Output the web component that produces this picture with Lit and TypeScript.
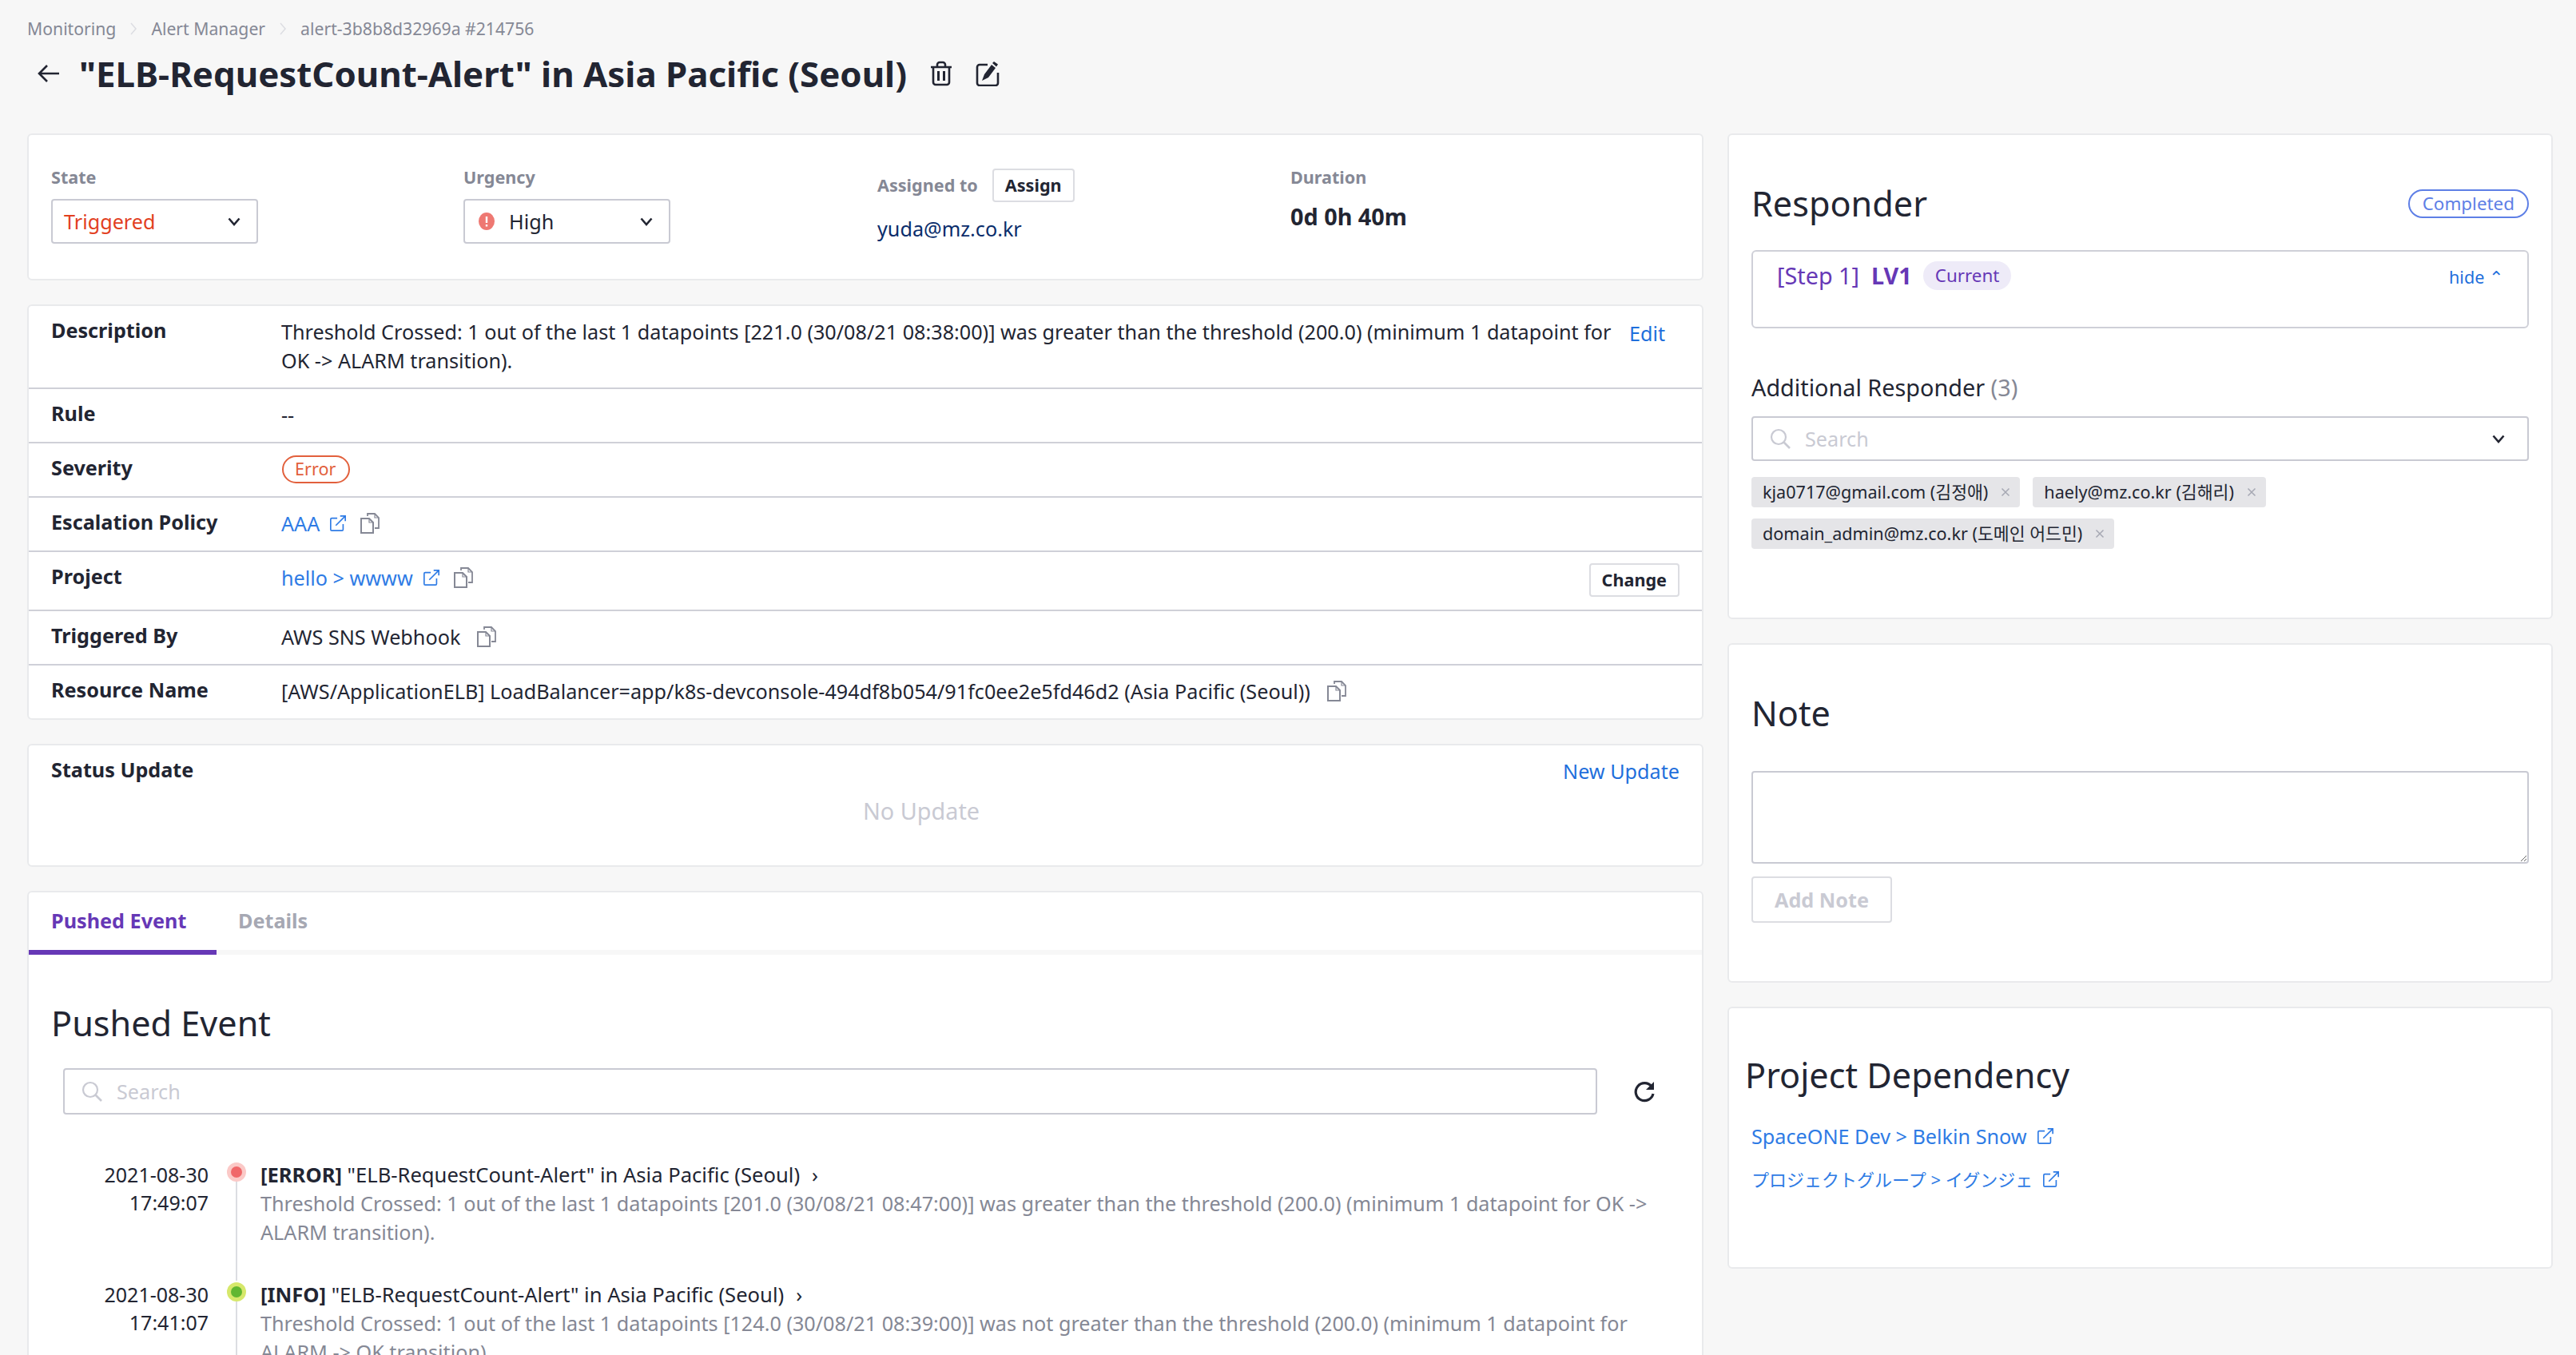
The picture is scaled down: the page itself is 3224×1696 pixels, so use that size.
import { LitElement, html, css } from "lit";
import { customElement } from "lit/decorators.js";

const chevron = html`<svg class="chev" viewBox="0 0 20 20"><path d="M3.500 6.500 10 14l6.500-7.500" fill="none" stroke="#222532" stroke-width="2.600"/></svg>`;
const searchIcon = html`<svg class="search-ico" viewBox="0 0 28 28"><circle cx="12" cy="12" r="9" fill="none" stroke="#c9cad3" stroke-width="2.200"/><path d="m18.500 18.500 7.500 7.500" stroke="#c9cad3" stroke-width="2.600"/></svg>`;
const extLink = html`<svg class="ico" viewBox="0 0 24 24"><path d="M11 5H3.500A1.500 1.500 0 0 0 2 6.500V20.500A1.500 1.500 0 0 0 3.500 22h14a1.500 1.500 0 0 0 1.500-1.500V13" fill="none" stroke="#2e7be5" stroke-width="1.800"/><path d="M9 15 22 2M15 2h7v7" fill="none" stroke="#2e7be5" stroke-width="1.800"/></svg>`;
const copyIcon = html`<svg class="copy" viewBox="0 0 26 28"><path d="M10 5V2h9l5 5v13h-5" fill="none" stroke="#858895" stroke-width="1.800"/><path d="M2 8h10l5 5v13H2z" fill="#fff" stroke="#858895" stroke-width="2"/><path d="M12 8v5h5M19 2v5h5" fill="none" stroke="#858895" stroke-width="1.200"/></svg>`;
const closeIcon = html`<svg class="x" viewBox="0 0 12 12"><path d="m1.500 1.500 9 9m0-9-9 9" stroke="#a6a8b3" stroke-width="1.500"/></svg>`;

const infoRows = [
  { label: "Rule", value: html`--` },
  { label: "Severity", value: html`<span class="sev">Error</span>` },
  { label: "Escalation Policy", value: html`<a class="link">AAA</a>${extLink}${copyIcon}` },
];

const events = [
  {
    date: "2021-08-30",
    time: "17:49:07",
    dot: "dot-err",
    level: "[ERROR]",
    text: "Threshold Crossed: 1 out of the last 1 datapoints [201.0 (30/08/21 08:47:00)] was greater than the threshold (200.0) (minimum 1 datapoint for OK -> ALARM transition).",
  },
  {
    date: "2021-08-30",
    time: "17:41:07",
    dot: "dot-info",
    level: "[INFO]",
    text: "Threshold Crossed: 1 out of the last 1 datapoints [124.0 (30/08/21 08:39:00)] was not greater than the threshold (200.0) (minimum 1 datapoint for ALARM -> OK transition).",
  },
];

@customElement("app-root")
export class AppRoot extends LitElement {
  static styles = css`
    :host {
      display: block;
      height: 1696px;
      overflow: hidden;
      background: #f7f7f7;
      color: #222532;
      font-family: "Noto Sans", "Noto Sans CJK KR", sans-serif;
      font-size: 25.2px;
      line-height: 36px;
    }
    .page {
      padding: 20px 28px 0 34px;
    }
    .crumbs {
      display: flex;
      align-items: center;
      height: 32px;
      font-size: 21.2px;
      color: #858895;
      gap: 17px;
    }
    .crumbs svg {
      width: 10px;
      height: 18px;
    }
    .head {
      display: flex;
      align-items: center;
      height: 60px;
      margin-top: 10px;
      padding-left: 12px;
    }
    .back {
      width: 30px;
      height: 30px;
      margin-right: 23px;
    }
    h1 {
      margin: 0;
      font-size: 43.8px;
      line-height: 60px;
      font-weight: 700;
    }
    .head-ico {
      width: 30px;
      height: 32px;
      margin-left: 28px;
    }
    .columns {
      display: grid;
      grid-template-columns: 2098px 1033px;
      gap: 30px;
      margin-top: 45px;
      align-items: start;
    }
    .col {
      display: flex;
      flex-direction: column;
      gap: 30px;
    }
    .card {
      background: #fff;
      border: 2px solid #e9eaec;
      border-radius: 6px;
      overflow: hidden;
    }
    .top {
      display: grid;
      grid-template-columns: 516px 518px 517px 1fr;
      height: 184px;
      padding: 38px 28px 0;
      box-sizing: border-box;
    }
    .lab {
      font-size: 21.6px;
      font-weight: 700;
      color: #858895;
      line-height: 30px;
    }
    .select {
      display: flex;
      align-items: center;
      justify-content: space-between;
      width: 259px;
      height: 56px;
      margin-top: 12px;
      padding: 0 18px 0 14px;
      box-sizing: border-box;
      background: #fff;
      border: 2px solid #c9cad3;
      border-radius: 4px;
    }
    .select .val {
      display: flex;
      align-items: center;
      gap: 18px;
      padding-left: 3px;
    }
    .red {
      color: #e2401f;
    }
    .chev {
      width: 20px;
      height: 20px;
      flex: none;
    }
    .assign {
      display: flex;
      align-items: center;
      gap: 18px;
      margin-top: 4px;
    }
    .btn {
      display: inline-flex;
      align-items: center;
      justify-content: center;
      box-sizing: border-box;
      height: 42px;
      padding: 0 14px;
      background: #fff;
      border: 2px solid #dcdde2;
      border-radius: 4px;
      font-size: 21.6px;
      font-weight: 700;
    }
    .email {
      margin-top: 15px;
      color: #0a2d6b;
    }
    .duration {
      margin-top: 16px;
      font-size: 28.8px;
      font-weight: 700;
    }
    .row {
      display: grid;
      grid-template-columns: 288px 1fr auto;
      padding: 12px 28px 16px;
      border-top: 2px solid #cfd0d8;
    }
    .row:first-child {
      border-top: 0;
    }
    .row .name {
      font-weight: 700;
    }
    .row .value {
      display: flex;
      align-items: center;
      align-self: start;
      min-height: 36px;
      margin-top: 2px;
    }
    .row .btn {
      margin-top: 2px;
    }
    .row .desc {
      display: block;
      padding-right: 10px;
    }
    .edit {
      padding-right: 18px;
      margin-top: 4px;
      color: #1f6fdc;
    }
    .link {
      color: #2e7be5;
    }
    .ico {
      width: 22px;
      height: 22px;
      margin-left: 12px;
      flex: none;
    }
    .copy {
      width: 26px;
      height: 28px;
      margin-left: 16px;
      flex: none;
    }
    .plain .copy {
      margin-left: 20px;
    }
    .sev {
      display: inline-flex;
      align-items: center;
      height: 35px;
      padding: 0 16px 0 14px;
      border: 2px solid #e2603c;
      border-radius: 18px;
      box-sizing: border-box;
      color: #e2603c;
      font-size: 21.6px;
      margin-left: 1px;
    }
    .status {
      height: 154px;
      padding: 12px 28px;
      box-sizing: border-box;
    }
    .status-head {
      display: flex;
      justify-content: space-between;
      font-weight: 700;
    }
    .status-head a {
      margin-top: 2px;
      font-weight: 400;
      color: #1f6fdc;
    }
    .empty {
      margin: 14px 0 0 140px;
      text-align: center;
      color: #c9cad3;
      font-size: 28.8px;
    }
    .tabs {
      display: flex;
      height: 78px;
      box-sizing: border-box;
      border-bottom: 6px solid #f7f7f7;
      font-weight: 700;
      color: #a6a8b3;
    }
    .tab {
      display: flex;
      align-items: center;
      height: 72px;
      padding: 0 36px 2px 27px;
      box-sizing: border-box;
    }
    .tab.on {
      width: 235px;
      height: 78px;
      padding: 0 0 2px 28px;
      color: #6638b6;
      border-bottom: 6px solid #6638b6;
    }
    .pane {
      padding: 56px 28px 60px;
    }
    h2 {
      margin: 0;
      font-size: 43.2px;
      line-height: 60px;
      font-weight: 400;
    }
    .search-row {
      display: flex;
      align-items: center;
      margin: 26px 0 0 15px;
    }
    .search {
      display: flex;
      align-items: center;
      gap: 17px;
      flex: 1;
      height: 58px;
      padding: 0 20px;
      box-sizing: border-box;
      background: #fff;
      border: 2px solid #c9cad3;
      border-radius: 4px;
    }
    .search input {
      flex: 1;
      min-width: 0;
      padding: 0;
      border: 0;
      outline: 0;
      background: transparent;
      font: inherit;
    }
    .search input::placeholder {
      color: #c9cad3;
      opacity: 1;
    }
    .search-ico {
      width: 28px;
      height: 28px;
      flex: none;
    }
    .refresh {
      width: 30px;
      height: 30px;
      margin: 0 29px 0 44px;
    }
    .events {
      margin-top: 58px;
    }
    .event {
      display: grid;
      grid-template-columns: 197px 65px 1fr;
      height: 150px;
    }
    .when {
      text-align: right;
      line-height: 35px;
      font-size: 25px;
    }
    .rail {
      display: flex;
      flex-direction: column;
      align-items: center;
      padding-left: 5px;
    }
    .rail::after {
      content: "";
      flex: 1;
      width: 2px;
      background: #dcdde2;
    }
    .dot {
      display: flex;
      align-items: center;
      justify-content: center;
      width: 24px;
      height: 24px;
      margin-top: 2px;
      flex: none;
      border-radius: 50%;
    }
    .dot i {
      display: block;
      width: 14px;
      height: 14px;
      border-radius: 50%;
    }
    .dot-err {
      background: #fbc9c7;
    }
    .dot-err i {
      background: #f0686a;
    }
    .dot-info {
      background: #d6e86b;
    }
    .dot-info i {
      background: #60b731;
    }
    .ev-title {
      display: flex;
      align-items: center;
      gap: 15px;
      font-size: 25.6px;
    }
    .ev-title b {
      font-weight: 700;
    }
    .ev-text {
      color: #858895;
      line-height: 35.5px;
    }
    .panel {
      padding: 0 28px;
      box-sizing: border-box;
    }
    .responder {
      height: 608px;
      padding-top: 56px;
    }
    .note {
      height: 425px;
      padding-top: 56px;
    }
    .dep {
      height: 328px;
      padding-top: 54px;
    }
    .p-head {
      display: flex;
      align-items: center;
      justify-content: space-between;
    }
    .pill {
      display: inline-flex;
      align-items: center;
      height: 36px;
      padding: 0 16px;
      box-sizing: border-box;
      border: 2px solid #5e7fe6;
      border-radius: 18px;
      color: #5e7fe6;
      font-size: 22.4px;
    }
    .step {
      display: flex;
      justify-content: space-between;
      height: 98px;
      margin-top: 28px;
      padding: 12px 30px 0;
      box-sizing: border-box;
      border: 2px solid #cfd0d8;
      border-radius: 6px;
    }
    .step-l {
      display: flex;
      align-items: flex-start;
      color: #6638b6;
      font-size: 28.8px;
    }
    .step-l b {
      margin-left: 15px;
    }
    .cur {
      display: inline-flex;
      align-items: center;
      height: 36px;
      margin-left: 14px;
      padding: 0 15px;
      background: #eeebf8;
      border-radius: 18px;
      font-size: 22.4px;
    }
    .hide {
      margin-top: 2px;
      color: #1f6fdc;
      font-size: 21.6px;
    }
    .add {
      margin-top: 56px;
      font-size: 28.8px;
    }
    .add span {
      color: #858895;
    }
    .combo {
      height: 56px;
      margin-top: 18px;
      padding-right: 26px;
    }
    .tags {
      display: flex;
      flex-wrap: wrap;
      gap: 14px 16px;
      margin-top: 20px;
    }
    .tag {
      display: inline-flex;
      align-items: center;
      gap: 16px;
      height: 38px;
      padding: 0 12px 0 14px;
      background: #e5e5e8;
      border-radius: 4px;
      font-size: 21.6px;
    }
    .x {
      width: 12px;
      height: 12px;
    }
    textarea {
      display: block;
      width: 100%;
      height: 116px;
      margin-top: 42px;
      box-sizing: border-box;
      border: 2px solid #c9cad3;
      border-radius: 4px;
      outline: 0;
    }
    .add-note {
      width: 176px;
      height: 58px;
      margin-top: 16px;
      color: #c9cad3;
      font-size: 25.2px;
    }
    .dep-title {
      margin-left: -8px;
    }
    .dep-links {
      display: flex;
      flex-direction: column;
      gap: 18px;
      margin-top: 28px;
    }
    .dep-links div {
      display: flex;
      align-items: center;
    }
    .ja {
      font-family: "Noto Sans", "Noto Sans CJK JP", sans-serif;
      font-size: 22px;
    }
  `;

  renderRow(label: string, value: unknown, cls = "") {
    return html`<div class="row ${cls}"><div class="name">${label}</div><div class="value">${value}</div></div>`;
  }

  renderEvent(e: (typeof events)[number]) {
    return html`<div class="event">
      <div class="when">${e.date}<br />${e.time}</div>
      <div class="rail"><span class="dot ${e.dot}"><i></i></span></div>
      <div>
        <div class="ev-title"><span><b>${e.level}</b> "ELB-RequestCount-Alert" in Asia Pacific (Seoul)</span><span>›</span></div>
        <div class="ev-text">${e.text}</div>
      </div>
    </div>`;
  }

  render() {
    const sep = html`<svg viewBox="0 0 10 18"><path d="m2 2 6 7-6 7" fill="none" stroke="#dcdde2" stroke-width="1.500"/></svg>`;
    return html`<div class="page">
      <div class="crumbs"><span>Monitoring</span>${sep}<span>Alert Manager</span>${sep}<span>alert-3b8b8d32969a #214756</span></div>
      <div class="head">
        <svg class="back" viewBox="0 0 30 30"><path d="M28 15H3M13 5 3 15l10 10" fill="none" stroke="#222532" stroke-width="2.600"/></svg>
        <h1>"ELB-RequestCount-Alert" in Asia Pacific (Seoul)</h1>
        <svg class="head-ico" viewBox="0 0 30 32"><path d="M2 8h26M10 8V5a3 3 0 0 1 3-3h4a3 3 0 0 1 3 3v3M5 8v19a3 3 0 0 0 3 3h14a3 3 0 0 0 3-3V8" fill="none" stroke="#222532" stroke-width="2.600"/><path d="M11.500 13v12M18.500 13v12" stroke="#222532" stroke-width="3"/></svg>
        <svg class="head-ico" viewBox="0 0 30 32"><path d="M15 5H5a3 3 0 0 0-3 3v20a3 3 0 0 0 3 3h20a3 3 0 0 0 3-3V15" fill="none" stroke="#222532" stroke-width="2.600"/><path d="m8 25 3-8 9-12 5 4-9 12zM21 3l2-2 5 3.500-2 3z" fill="#222532"/></svg>
      </div>
      <div class="columns">
        <div class="col">
          <div class="card top">
            <div><div class="lab">State</div><div class="select"><span class="red">Triggered</span>${chevron}</div></div>
            <div>
              <div class="lab">Urgency</div>
              <div class="select">
                <span class="val"><svg width="20" height="24" viewBox="0 0 20 24"><ellipse cx="10" cy="12" rx="10" ry="11" fill="#ee7872"/><path d="M10 6v8M10 16v2.500" stroke="#fff" stroke-width="2.400"/></svg>High</span>${chevron}
              </div>
            </div>
            <div>
              <div class="assign"><span class="lab">Assigned to</span><span class="btn">Assign</span></div>
              <div class="email">yuda@mz.co.kr</div>
            </div>
            <div><div class="lab">Duration</div><div class="duration">0d 0h 40m</div></div>
          </div>
          <div class="card">
            <div class="row">
              <div class="name">Description</div>
              <div class="value desc">Threshold Crossed: 1 out of the last 1 datapoints [221.0 (30/08/21 08:38:00)] was greater than the threshold (200.0) (minimum 1 datapoint for OK -> ALARM transition).</div>
              <a class="edit">Edit</a>
            </div>
            ${infoRows.map((r) => this.renderRow(r.label, r.value))}
            <div class="row">
              <div class="name">Project</div>
              <div class="value"><a class="link">hello > wwww</a>${extLink}${copyIcon}</div>
              <span class="btn">Change</span>
            </div>
            ${this.renderRow("Triggered By", html`AWS SNS Webhook${copyIcon}`, "plain")}
            ${this.renderRow("Resource Name", html`[AWS/ApplicationELB] LoadBalancer=app/k8s-devconsole-494df8b054/91fc0ee2e5fd46d2 (Asia Pacific (Seoul))${copyIcon}`, "plain")}
          </div>
          <div class="card status">
            <div class="status-head"><span>Status Update</span><a>New Update</a></div>
            <div class="empty">No Update</div>
          </div>
          <div class="card">
            <div class="tabs"><div class="tab on">Pushed Event</div><div class="tab">Details</div></div>
            <div class="pane">
              <h2>Pushed Event</h2>
              <div class="search-row">
                <div class="search">${searchIcon}<input placeholder="Search" /></div>
                <svg class="refresh" viewBox="0 0 30 30"><path d="M24 9a11 11 0 1 0 2 9" fill="none" stroke="#222532" stroke-width="3.200"/><path d="M27 3v10H17z" fill="#222532"/></svg>
              </div>
              <div class="events">${events.map((e) => this.renderEvent(e))}</div>
            </div>
          </div>
        </div>
        <div class="col">
          <div class="card panel responder">
            <div class="p-head"><h2>Responder</h2><span class="pill">Completed</span></div>
            <div class="step">
              <div class="step-l">[Step 1]<b>LV1</b><span class="cur">Current</span></div>
              <span class="hide">hide ⌃</span>
            </div>
            <div class="add">Additional Responder <span>(3)</span></div>
            <div class="search combo">${searchIcon}<input placeholder="Search" />${chevron}</div>
            <div class="tags">
              <span class="tag">kja0717@gmail.com (김정애)${closeIcon}</span>
              <span class="tag">haely@mz.co.kr (김해리)${closeIcon}</span>
              <span class="tag">domain_admin@mz.co.kr (도메인 어드민)${closeIcon}</span>
            </div>
          </div>
          <div class="card panel note">
            <h2>Note</h2>
            <textarea></textarea>
            <span class="btn add-note">Add Note</span>
          </div>
          <div class="card panel dep">
            <h2 class="dep-title">Project Dependency</h2>
            <div class="dep-links">
              <div><a class="link">SpaceONE Dev > Belkin Snow</a>${extLink}</div>
              <div><a class="link ja">プロジェクトグループ > イグンジェ</a>${extLink}</div>
            </div>
          </div>
        </div>
      </div>
    </div>`;
  }
}
